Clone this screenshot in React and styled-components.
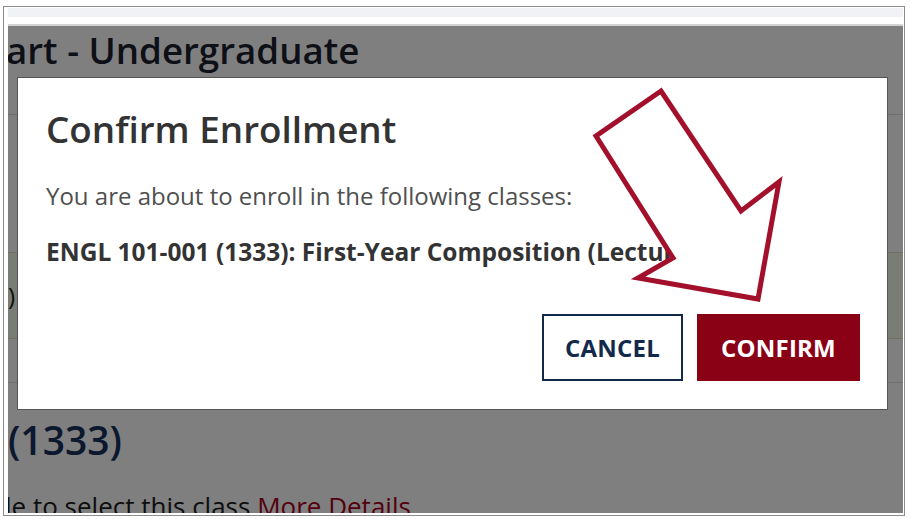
import React from "react";
import styled, { createGlobalStyle } from "styled-components";

const GlobalStyle = createGlobalStyle`
  html, body { margin: 0; padding: 0; background: #ffffff; }
  body { font-family: "Open Sans", "Noto Sans", sans-serif; }
  * { box-sizing: border-box; }
`;

const Frame = styled.div`
  width: 902px;
  height: 510px;
  margin: 6px 0 0 3px;
  border: 1px solid #8c8c8c;
  padding: 1px 1px 2px 4px;
  display: flex;
  flex-direction: column;
  overflow: hidden;
  background: #ffffff;
`;

const TopStrip = styled.div`
  height: 9px;
  background: #f1f2f5;
  flex: none;
`;

const TopGap = styled.div`
  height: 7px;
  flex: none;
`;

const TopRule = styled.div`
  height: 2px;
  background: #d3d3d3;
  flex: none;
`;

const PageArea = styled.div`
  flex: 1;
  position: relative;
  overflow: hidden;
  background: #ffffff;
  display: flex;
  flex-direction: column;
`;

const PageTitle = styled.h1`
  margin: 2px 0 0;
  font-size: 36.7px;
  line-height: 44px;
  font-weight: 600;
  color: #1c2030;
  white-space: nowrap;
  text-indent: -2px;
`;

const Rows = styled.div`
  margin-top: 42px;
  display: flex;
  flex-direction: column;
  border-bottom: 1px solid #dcdcdc;
`;

const Row = styled.div`
  height: ${(p) => p.$h}px;
  border-top: 1px solid #dcdcdc;
  background: ${(p) => (p.$tint ? "#f3fbe8" : "#ffffff")};
  display: flex;
  align-items: center;
  font-size: 24px;
  color: #1a1a1a;
`;

const ClassTitle = styled.h2`
  margin: 34px 0 0;
  font-size: 39px;
  line-height: 46px;
  font-weight: 600;
  color: #16305c;
  white-space: nowrap;
`;

const Note = styled.p`
  margin: 26px 0 0;
  font-size: 26px;
  line-height: 34px;
  color: #1c1c1c;
  white-space: nowrap;
  text-indent: -3px;
`;

const DetailLink = styled.span`
  color: #a8001c;
`;

const Overlay = styled.div`
  position: absolute;
  inset: 0;
  background: rgba(0, 0, 0, 0.5);
  padding: 51px 0 0 9px;
`;

const Modal = styled.div`
  position: relative;
  width: 871px;
  height: 333px;
  background: #ffffff;
  border: 1px solid #555555;
  padding: 0 27px 28px 28px;
  display: flex;
  flex-direction: column;
`;

const ModalTitle = styled.h3`
  margin: 29px 0 0;
  font-size: 36.8px;
  line-height: 44px;
  font-weight: 600;
  color: #333333;
`;

const ModalText = styled.p`
  margin: 29px 0 0;
  font-size: 24px;
  line-height: 32px;
  font-weight: 400;
  color: #4f4f4f;
  white-space: nowrap;
`;

const ClassLine = styled.p`
  margin: 24px 0 0;
  font-size: 24.5px;
  line-height: 32px;
  font-weight: 700;
  color: #333333;
  white-space: nowrap;
`;

const Actions = styled.div`
  margin-top: auto;
  display: flex;
  justify-content: flex-end;
  gap: 14px;
`;

const Button = styled.button`
  height: 67px;
  width: ${(p) => p.$w}px;
  font-family: "Open Sans", "Noto Sans", sans-serif;
  font-size: 24px;
  font-weight: 700;
  letter-spacing: 0.2px;
  border: 2px solid ${(p) => (p.$primary ? "#8a0015" : "#13294b")};
  background: ${(p) => (p.$primary ? "#8a0015" : "#ffffff")};
  color: ${(p) => (p.$primary ? "#ffffff" : "#13294b")};
  display: flex;
  align-items: center;
  justify-content: center;
  padding: 0;
`;

const ArrowLayer = styled.svg`
  position: absolute;
  left: 0;
  top: 0;
  width: 871px;
  height: 333px;
  overflow: visible;
  pointer-events: none;
`;

export default function App() {
  return (
    <>
      <GlobalStyle />
      <Frame>
        <TopStrip />
        <TopGap />
        <TopRule />
        <PageArea>
          <PageTitle>art - Undergraduate</PageTitle>
          <Rows>
            <Row $h={138} />
            <Row $h={86} $tint>)</Row>
            <Row $h={44} />
          </Rows>
          <ClassTitle>(1333)</ClassTitle>
          <Note>
            le to select this class <DetailLink>More Details</DetailLink>
          </Note>
          <Overlay>
            <Modal>
              <ModalTitle>Confirm Enrollment</ModalTitle>
              <ModalText>You are about to enroll in the following classes:</ModalText>
              <ClassLine>ENGL 101-001 (1333): First-Year Composition (Lecture)</ClassLine>
              <Actions>
                <Button $w={141}>CANCEL</Button>
                <Button $w={163} $primary>CONFIRM</Button>
              </Actions>
              <ArrowLayer viewBox="0 0 871 333">
                <polygon
                  points="643,13 578,58 655,180 620,200 740,221 761,104 723,133"
                  fill="#ffffff"
                  stroke="#a3102c"
                  strokeWidth="5"
                  strokeLinejoin="miter"
                />
              </ArrowLayer>
            </Modal>
          </Overlay>
        </PageArea>
      </Frame>
    </>
  );
}
